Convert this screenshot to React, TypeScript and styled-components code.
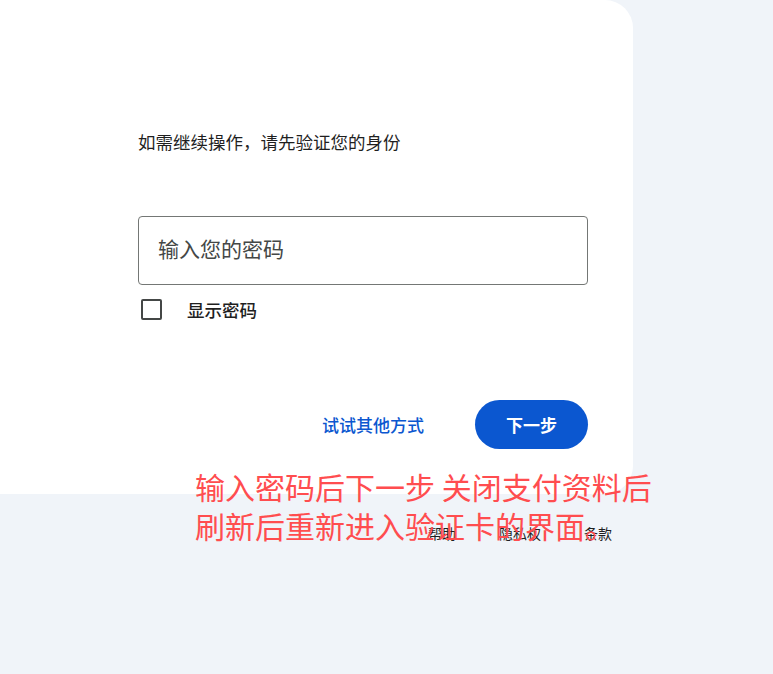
import React from 'react';
import styled, {createGlobalStyle} from 'styled-components';

const GlobalStyle = createGlobalStyle`
    html, body {
        margin: 0;
        padding: 0;
        background: #f0f4f9;
    }
    body {
        font-family: "Noto Sans CJK SC", "Noto Sans", Roboto, sans-serif;
        color: #1f1f1f;
    }
`;

const Page = styled.div`
    position: relative;
    min-height: 100vh;
    background: #f0f4f9;
`;

const Card = styled.div`
    width: 633px;
    box-sizing: border-box;
    padding: 130px 45px 45px 138px;
    background: #ffffff;
    border-radius: 0 28px 28px 0;
    display: flex;
    flex-direction: column;
`;

const Heading = styled.div`
    font-size: 17.5px;
    line-height: 24px;
    color: #1f1f1f;
`;

const PasswordInput = styled.input`
    margin-top: 62px;
    height: 69px;
    box-sizing: border-box;
    width: 100%;
    border: 1px solid #747775;
    border-radius: 4px;
    padding: 0 19px 5px;
    font-family: inherit;
    font-size: 21px;
    color: #1f1f1f;
    outline: none;
    &::placeholder {
        color: #444746;
    }
`;

const CheckRow = styled.label`
    margin-top: 12px;
    display: flex;
    align-items: center;
    height: 24px;
    gap: 25px;
    padding-left: 3px;
    font-size: 17.5px;
    font-weight: 500;
    color: #1f1f1f;
`;

const CheckBox = styled.span`
    width: 21px;
    height: 21px;
    box-sizing: border-box;
    border: 2px solid #444746;
    border-radius: 2px;
`;

const Actions = styled.div`
    margin-top: 79px;
    display: flex;
    justify-content: flex-end;
    align-items: center;
    gap: 51px;
`;

const TextButton = styled.button`
    border: none;
    background: none;
    padding: 0;
    font-family: inherit;
    font-size: 17px;
    font-weight: 500;
    color: #0b57d0;
    cursor: pointer;
`;

const PrimaryButton = styled.button`
    width: 113px;
    height: 49px;
    border: none;
    border-radius: 25px;
    background: #0b57d0;
    color: #ffffff;
    font-family: inherit;
    font-size: 17px;
    font-weight: 700;
    cursor: pointer;
`;

const Footer = styled.div`
    width: 633px;
    box-sizing: border-box;
    padding: 29px 21px 0 0;
    display: flex;
    justify-content: flex-end;
    gap: 43px;
`;

const FooterLink = styled.a`
    font-size: 14px;
    line-height: 20px;
    color: #1f1f1f;
    text-decoration: none;
`;

// 截图上的标注文字，叠在页面上面
const Annotation = styled.div`
    position: absolute;
    left: 195px;
    top: 467px;
    font-size: 30px;
    line-height: 39px;
    color: #ff4d4f;
    white-space: nowrap;
    pointer-events: none;
`;

function App() {
    return (
        <>
            <GlobalStyle />
            <Page>
                <Card>
                    <Heading>如需继续操作，请先验证您的身份</Heading>
                    <PasswordInput type="password" placeholder="输入您的密码" />
                    <CheckRow>
                        <CheckBox />
                        显示密码
                    </CheckRow>
                    <Actions>
                        <TextButton>试试其他方式</TextButton>
                        <PrimaryButton>下一步</PrimaryButton>
                    </Actions>
                </Card>
                <Footer>
                    <FooterLink>帮助</FooterLink>
                    <FooterLink>隐私权</FooterLink>
                    <FooterLink>条款</FooterLink>
                </Footer>
                <Annotation>
                    输入密码后下一步 关闭支付资料后
                    <br />
                    刷新后重新进入验证卡的界面。
                </Annotation>
            </Page>
        </>
    );
}

export default App;
